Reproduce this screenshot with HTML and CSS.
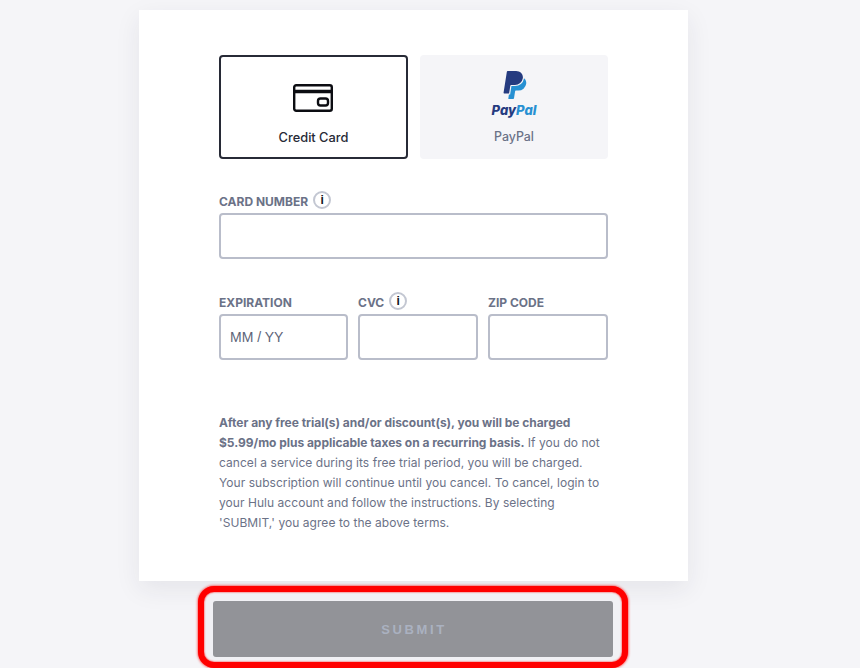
FILE: index.html
```html
<!DOCTYPE html>
<html lang="en">
<head>
    <meta charset="UTF-8">
    <meta name="viewport" content="width=device-width, initial-scale=1.0">
    <title>Payment</title>
    <link rel="stylesheet" href="styles.css">
</head>
<body>
    <div class="pagina">
        <form class="tarjeta">
            <div class="metodos">
                <button type="button" class="metodo activo">
                    <svg class="icono-card" width="40" height="28" viewBox="0 0 40 28" fill="none" stroke="#0c0d12" stroke-width="2.4">
                        <rect x="1.2" y="1.2" width="37.6" height="25.6" rx="2"/>
                        <path d="M1 7.5h38" stroke-width="3.6"/>
                        <rect x="25" y="14.5" width="10" height="7" rx="2.5"/>
                    </svg>
                    <span>Credit Card</span>
                </button>
                <button type="button" class="metodo">
                    <svg class="icono-pp" width="27" height="28" viewBox="2 0 21 24">
                        <path fill="#253b80" d="M7.016 19.198h-4.2a.562.562 0 0 1-.555-.65L5.093.584A.692.692 0 0 1 5.776 0h7.222c3.417 0 5.904 2.488 5.846 5.5-.006.25-.027.5-.066.747A6.794 6.794 0 0 1 12.071 12H8.743a.69.69 0 0 0-.682.583l-.325 2.056-.013.083-.692 4.39-.015.087z"/>
                        <path fill="#2790d2" d="M19.79 6.142c-.01.087-.01.175-.023.261a7.76 7.76 0 0 1-7.695 6.559H9.007l-.283 1.795-.013.083-.692 4.39-.134.843-.014.088H6.86l-.497 3.15a.562.562 0 0 0 .555.65h3.612c.34 0 .63-.249.683-.585l.952-6.031a.692.692 0 0 1 .683-.584h2.126a6.793 6.793 0 0 0 6.707-5.752c.306-1.95-.466-3.744-1.89-4.868z"/>
                    </svg>
                    <span class="marca"><span class="marca-pay">Pay</span><span class="marca-pal">Pal</span></span>
                    <span class="metodo-nombre">PayPal</span>
                </button>
            </div>

            <div class="campo campo-numero">
                <label class="etiqueta">CARD NUMBER <i class="info">i</i></label>
                <input type="text" class="entrada">
            </div>

            <div class="fila">
                <div class="campo">
                    <label class="etiqueta">EXPIRATION</label>
                    <input type="text" class="entrada" placeholder="MM / YY">
                </div>
                <div class="campo">
                    <label class="etiqueta">CVC <i class="info">i</i></label>
                    <input type="text" class="entrada">
                </div>
                <div class="campo">
                    <label class="etiqueta">ZIP CODE</label>
                    <input type="text" class="entrada">
                </div>
            </div>

            <p class="legal"><strong>After any free trial(s) and/or discount(s), you will be charged $5.99/mo plus applicable taxes on a recurring basis.</strong> If you do not cancel a service during its free trial period, you will be charged. Your subscription will continue until you cancel. To cancel, login to your Hulu account and follow the instructions. By selecting 'SUBMIT,' you agree to the above terms.</p>
        </form>

        <div class="marco-rojo">
            <button type="button" class="enviar">SUBMIT</button>
        </div>
    </div>
</body>
</html>
```

FILE: styles.css
```css
html, body {
    height: 100%;
}

body {
    margin: 0;
    background-color: #f5f5f8;
    font-family: 'Inter', 'Liberation Sans', sans-serif;
    color: #6b7287;
    overflow: hidden;
}

.pagina {
    width: 549px;
    margin-left: 139px;
    padding-top: 10px;
    display: flex;
    flex-direction: column;
    align-items: flex-start;
}

.tarjeta {
    box-sizing: border-box;
    width: 549px;
    height: 571px;
    padding: 45px 80px 0;
    background-color: #fff;
    box-shadow: 0 8px 24px rgba(40, 40, 60, 0.08);
}

.metodos {
    display: grid;
    grid-template-columns: 189px 188px;
    gap: 12px;
}

.metodo {
    box-sizing: border-box;
    height: 104px;
    padding: 0;
    border: none;
    border-radius: 4px;
    background-color: #f5f5f8;
    font-family: inherit;
    font-size: 12.4px;
    font-weight: 500;
    color: #6b7287;
    display: flex;
    flex-direction: column;
    align-items: center;
}

.metodo.activo {
    border: 2px solid #272a36;
    background-color: #fff;
    font-size: 12.8px;
    color: #272a36;
}

.icono-card {
    margin-top: 27px;
    margin-bottom: 18px;
    margin-right: 2px;
}

.icono-pp {
    margin-top: 16px;
    margin-left: 2px;
}

.marca {
    margin-top: 3px;
    font-size: 13px;
    line-height: 16px;
    font-weight: 800;
    font-style: italic;
}

.marca-pay {
    color: #253b80;
}

.marca-pal {
    color: #2790d2;
}

.metodo-nombre {
    margin-top: 11px;
}

.campo-numero {
    margin-top: 32px;
}

.etiqueta {
    display: flex;
    align-items: center;
    gap: 5px;
    height: 18px;
    margin-bottom: 4px;
    padding-top: 2px;
    box-sizing: border-box;
    font-size: 12px;
    font-weight: 700;
    color: #6b7287;
}

.info {
    box-sizing: border-box;
    width: 18px;
    height: 18px;
    margin-top: -2px;
    border: 2px solid #c3c7d2;
    border-radius: 50%;
    font-family: 'Liberation Sans', sans-serif;
    font-style: normal;
    font-size: 12px;
    font-weight: 700;
    line-height: 14px;
    text-align: center;
    color: #14151c;
}

.entrada {
    display: block;
    box-sizing: border-box;
    width: 100%;
    height: 46px;
    padding: 0 9px;
    border: 2px solid #b9bdca;
    border-radius: 4px;
    background-color: #fff;
    font-family: 'Liberation Sans', sans-serif;
    font-size: 14px;
}

.entrada::placeholder {
    color: #5d6478;
    opacity: 1;
}

.fila {
    display: grid;
    grid-template-columns: 129px 120px 120px;
    gap: 10px;
    margin-top: 33px;
}

.legal {
    margin: 53px 0 0;
    font-size: 12px;
    line-height: 20px;
    letter-spacing: 0.05px;
    color: #6b7287;
}

.legal strong {
    font-weight: 700;
    letter-spacing: -0.03px;
}

.marco-rojo {
    flex-shrink: 0;
    width: 430px;
    box-sizing: border-box;
    margin-top: 5px;
    margin-left: 59px;
    padding: 8px 8px 4px;
    border: 6px solid #f00;
    border-radius: 16px;
    background-color: #f1f1f5;
    box-shadow: 0 0 3px #f00, inset 0 0 2px #f00;
}

.marco-rojo .enviar {
    margin: 1px;
}

.enviar {
    display: block;
    width: 400px;
    height: 56px;
    padding: 0 0 0 2px;
    border: none;
    border-radius: 3px;
    background-color: #929398;
    font-family: 'Liberation Sans', sans-serif;
    font-size: 13px;
    font-weight: 700;
    letter-spacing: 2.6px;
    color: #aab1c0;
}
```
